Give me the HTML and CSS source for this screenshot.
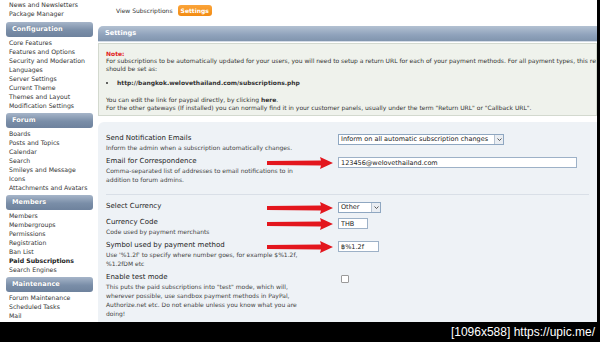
FILE: index.html
```html
<!DOCTYPE html>
<html lang="en">
<head>
  <meta charset="UTF-8" />
  <title>Paid Subscriptions - Settings</title>
  <link rel="stylesheet" href="styles.css">
</head>
<body>
  <div class="shot">
    <div class="page">
      <!-- ───────── SIDEBAR ───────── -->
      <aside class="side">
        <ul class="links first">
          <li>News and Newsletters</li>
          <li>Package Manager</li>
        </ul>

        <h3 class="side-head">Configuration</h3>
        <ul class="links">
          <li>Core Features</li>
          <li>Features and Options</li>
          <li>Security and Moderation</li>
          <li>Languages</li>
          <li>Server Settings</li>
          <li>Current Theme</li>
          <li>Themes and Layout</li>
          <li>Modification Settings</li>
        </ul>

        <h3 class="side-head">Forum</h3>
        <ul class="links">
          <li>Boards</li>
          <li>Posts and Topics</li>
          <li>Calendar</li>
          <li>Search</li>
          <li>Smileys and Message</li>
          <li>Icons</li>
          <li>Attachments and Avatars</li>
        </ul>

        <h3 class="side-head">Members</h3>
        <ul class="links">
          <li>Members</li>
          <li>Membergroups</li>
          <li>Permissions</li>
          <li>Registration</li>
          <li>Ban List</li>
          <li class="current">Paid Subscriptions</li>
          <li>Search Engines</li>
        </ul>

        <h3 class="side-head">Maintenance</h3>
        <ul class="links">
          <li>Forum Maintenance</li>
          <li>Scheduled Tasks</li>
          <li>Mail</li>
        </ul>
      </aside>

      <!-- ───────── MAIN ───────── -->
      <main class="main">
        <nav class="tabs">
          <a class="tab">View Subscriptions</a>
          <a class="tab on">Settings</a>
        </nav>

        <h2 class="bar">Settings</h2>

        <div class="note">
          <strong class="note-title">Note:</strong>
          <p>For subscriptions to be automatically updated for your users, you will need to setup a return URL for each of your payment methods. For all payment types, this return URL<br>should be set as:</p>
          <ul>
            <li>http://bangkok.welovethailand.com/subscriptions.php</li>
          </ul>
          <p>You can edit the link for paypal directly, by clicking <b>here</b>.<br>
          For the other gateways (If installed) you can normally find it in your customer panels, usually under the term "Return URL" or "Callback URL".</p>
        </div>

        <form class="panel">
          <div class="group">
            <div class="row">
              <div class="label">
                <div class="name">Send Notification Emails</div>
                <div class="desc">Inform the admin when a subscription automatically changes.</div>
              </div>
              <div class="ctrl">
                <span class="sel wide">Inform on all automatic subscription changes<span class="caret"><svg width="5" height="3" viewBox="0 0 5 3"><path d="M0.5 0.5 L2.5 2.5 L4.5 0.5" fill="none" stroke="#333" stroke-width="0.8"/></svg></span></span>
              </div>
            </div>

            <div class="row">
              <div class="label">
                <div class="name">Email for Correspondence</div>
                <div class="desc">Comma-separated list of addresses to email notifications to in<br>addition to forum admins.</div>
              </div>
              <div class="ctrl">
                <input class="txt email" type="text" value="123456@welovethailand.com">
              </div>
              <svg class="arrow" width="66" height="12" viewBox="0 0 66 12"><polygon points="0,4 54,3.4 53,0 66,6 53,12 54,8.6 0,8" fill="#e3161d"/></svg>
            </div>
          </div>

          <div class="group">
            <div class="row">
              <div class="label">
                <div class="name">Select Currency</div>
              </div>
              <div class="ctrl">
                <span class="sel short">Other<span class="caret"><svg width="5" height="3" viewBox="0 0 5 3"><path d="M0.5 0.5 L2.5 2.5 L4.5 0.5" fill="none" stroke="#333" stroke-width="0.8"/></svg></span></span>
              </div>
              <svg class="arrow" width="66" height="12" viewBox="0 0 66 12"><polygon points="0,4 54,3.4 53,0 66,6 53,12 54,8.6 0,8" fill="#e3161d"/></svg>
            </div>

            <div class="row">
              <div class="label">
                <div class="name">Currency Code</div>
                <div class="desc">Code used by payment merchants</div>
              </div>
              <div class="ctrl">
                <input class="txt code" type="text" value="THB">
              </div>
              <svg class="arrow" width="66" height="12" viewBox="0 0 66 12"><polygon points="0,4 54,3.4 53,0 66,6 53,12 54,8.6 0,8" fill="#e3161d"/></svg>
            </div>

            <div class="row">
              <div class="label">
                <div class="name">Symbol used by payment method</div>
                <div class="desc">Use '%1.2f' to specify where number goes, for example $%1.2f,<br>%1.2fDM etc</div>
              </div>
              <div class="ctrl">
                <input class="txt symbol" type="text" value="฿%1.2f">
              </div>
              <svg class="arrow" width="66" height="12" viewBox="0 0 66 12"><polygon points="0,4 54,3.4 53,0 66,6 53,12 54,8.6 0,8" fill="#e3161d"/></svg>
            </div>

            <div class="row">
              <div class="label">
                <div class="name">Enable test mode</div>
                <div class="desc">This puts the paid subscriptions into "test" mode, which will,<br>wherever possible, use sandbox payment methods in PayPal,<br>Authorize.net etc. Do not enable unless you know what you are<br>doing!</div>
              </div>
              <div class="ctrl">
                <span class="check"></span>
              </div>
            </div>
          </div>
        </form>
      </main>
    </div>

    <div class="caption">[1096x588] https://upic.me/</div>
  </div>
</body>
</html>
```

FILE: styles.css
```css
/* ---------- GLOBAL ---------- */
*,*::before,*::after{box-sizing:border-box}
body{margin:0;background:#000;color:#333;font-family:"DejaVu Sans",Verdana,sans-serif}

.shot{width:600px;height:342px;overflow:hidden;background:#000}
.page{width:597px;height:322px;background:#fff;display:flex;overflow:hidden}

/* ---------- SIDEBAR ---------- */
.side{flex:0 0 95px}
.links{list-style:none;margin:1px 0 3px;padding:0 0 0 9px;font-size:6.2px;line-height:9px;color:#333;white-space:nowrap}
.links.first{margin:0 0 4px}
.links .current{font-weight:700;color:#222}
.side-head{margin:0 2px 0 6px;height:15px;padding-left:6px;border-radius:3px;
           background:linear-gradient(#a6b5c9,#7a8ea8 55%,#6e829d);
           color:#fff;font-size:6.6px;line-height:15px;font-weight:700;text-shadow:0 0 1px rgba(0,0,0,.25)}

/* ---------- MAIN ---------- */
.main{flex:1;min-width:0;padding-left:3px;display:flex;flex-direction:column;overflow:hidden}

.tabs{height:26px;display:flex;align-items:flex-start;gap:2px;padding:5px 0 0 15px}
.tab{padding:0 3px;font-size:6px;line-height:11px;color:#333;border-radius:3px;white-space:nowrap}
.tab.on{background:linear-gradient(#fba43a,#f28b12);color:#fff;font-weight:700}

.bar{margin:0;height:16px;padding-left:7px;border-radius:5px 0 0 0;
     border-bottom:1px solid #d4dce6;
     background:linear-gradient(#b3c1d2,#8fa2bb 60%,#8195ae);
     color:#fff;font-size:6.6px;line-height:15px;font-weight:700}

.note{margin-top:1px;padding:7px 0 3px 7px;border:1px solid #d3d9cf;background:#eff2ec;
      font-size:6px;line-height:8px;color:#333;white-space:nowrap;overflow:hidden}
.note-title{display:block;line-height:6px;color:#e21b1b}
.note p{margin:0}
.note ul{margin:6px 0 9px;padding-left:11px;font-weight:700}

/* ---------- SETTINGS PANEL ---------- */
.panel{flex:1;margin-top:6px;padding:12px 8px 0;border-radius:6px 0 0 0;background:#eef2f6}
.group{display:flex;flex-direction:column;gap:5px}
.group:first-child{padding-bottom:10px;border-bottom:1px solid #d9dfe7}
.group + .group{padding-top:7px}

.row{position:relative;display:grid;grid-template-columns:232px 1fr}
.name{font-size:7px;line-height:9px;color:#222;white-space:nowrap}
.desc{font-size:6px;line-height:9px;color:#444;white-space:nowrap}
.ctrl{display:flex;align-items:flex-start}

.sel{display:inline-flex;justify-content:space-between;height:11px;padding-left:2px;
     border:1px solid #8fa7c1;background:#fff;font-size:6.5px;line-height:9px;color:#222;white-space:nowrap}
.sel.wide{width:166px}
.sel.short{width:43px}
.caret{display:flex;align-items:center;justify-content:center;width:9px;height:9px;
       border-left:1px solid #b5c2d1;background:#e9edf2}

.txt{height:11px;padding:0 2px;border:1px solid #9db1c7;background:#fff;
     font-family:inherit;font-size:6.5px;color:#222;outline:none}
.txt.email{width:239px}
.txt.code{width:30px}
.txt.symbol{width:41px}

.check{width:8px;height:8px;margin:2px 0 0 3px;border:1px solid #9a9a9a;border-radius:1px;background:#fff}

.arrow{position:absolute;left:161px;top:0}

/* ---------- CAPTION ---------- */
.caption{height:20px;padding-right:5px;text-align:right;color:#fff;
         font-family:"Liberation Sans",Arial,sans-serif;font-size:12px;line-height:20px}
```
